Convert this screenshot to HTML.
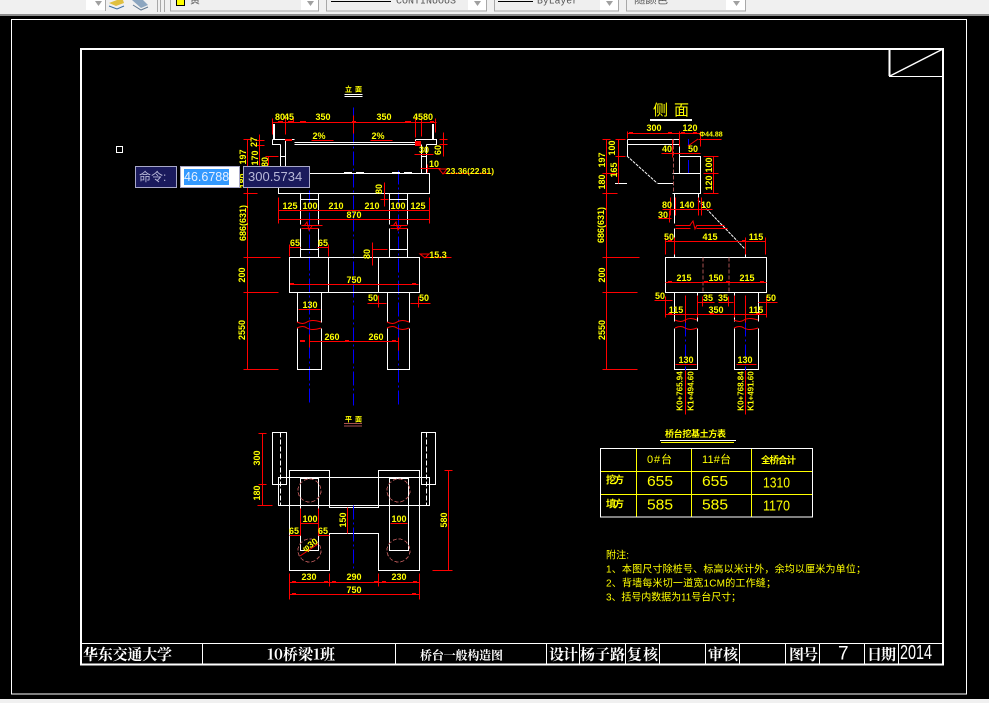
<!DOCTYPE html>
<html><head><meta charset="utf-8"><style>
html,body{margin:0;padding:0;background:#000;width:989px;height:703px;overflow:hidden}
svg{display:block;position:absolute;left:0;top:0}
.w,.r,.b,.br,.y0{fill:none;shape-rendering:crispEdges;transform:translate(.5px,.5px)}
.w{stroke:#fff;stroke-width:1.25}
.w2{stroke:#fff;stroke-width:2;fill:none;shape-rendering:crispEdges}
.r{stroke:#f00;stroke-width:1}
.r2{stroke:#f00;stroke-width:2;fill:none;shape-rendering:crispEdges}
.b{stroke:#00f;stroke-width:1;stroke-dasharray:14 3 2 3}
.br{stroke:#a85050;stroke-width:1;stroke-dasharray:4 2}
.y0{stroke:#ff0;stroke-width:1}
.t text{font:bold 9px "Liberation Sans",sans-serif;fill:#ff0;text-anchor:middle;dominant-baseline:central}
.c text{font-family:"Liberation Sans","Noto Sans CJK SC",sans-serif;fill:#ff0;dominant-baseline:central}
.s text{font-family:"Noto Serif CJK SC","Liberation Serif",serif;fill:#fff;dominant-baseline:central;font-weight:bold}
.n text{font-family:"Liberation Sans","Noto Sans CJK SC",sans-serif;fill:#fff;dominant-baseline:central}
.tb text{font:10px "Liberation Mono","Noto Sans CJK SC",monospace;fill:#555;dominant-baseline:central}
.box{position:absolute;box-sizing:border-box;border:1px solid #a8a8c8;background:#1a1a5c;color:#b8b8d8;font:13px/20px "Liberation Sans","Noto Sans CJK SC",sans-serif;white-space:nowrap;overflow:hidden}
</style></head><body>
<svg width="989" height="703" viewBox="0 0 989 703" xmlns="http://www.w3.org/2000/svg">
<rect width="989" height="703" fill="#000"/>
<!-- toolbar -->
<rect x="0" y="0" width="989" height="14" fill="#f0f0f0"/>
<rect x="0" y="14" width="989" height="2" fill="#8c8c8c"/>
<rect x="0" y="699" width="989" height="4" fill="#f0f0f0"/>
<rect x="86" y="0" width="19" height="10" fill="#fff"/>
<path d="M95 1h7l-3.500 5z" fill="#a0a0a0"/>
<path d="M105.500 0v11M157.500 0v12M160.500 0v12M164.500 0v12" stroke="#a8a8a8" fill="none"/>
<path d="M109 3l8 -3h6l1 3l-8 3z" fill="#e0c040"/>
<path d="M109 6l8 3l7 -3" stroke="#3a6ea5" fill="none"/>
<path d="M132 0h11l5 5l-7 3z" fill="#8ca6c0"/>
<path d="M133 5l8 5l7 -3" stroke="#607890" fill="none"/>
<g fill="#efefef" stroke="#a8a8a8">
<rect x="170.500" y="-2" width="148" height="13"/>
<rect x="326.500" y="-2" width="160" height="13"/>
<rect x="494.500" y="-2" width="124" height="13"/>
<rect x="626.500" y="-2" width="119" height="13"/>
</g>
<g fill="#fff">
<rect x="301" y="0" width="17" height="10"/><rect x="468" y="0" width="18" height="10"/><rect x="600" y="0" width="18" height="10"/><rect x="726" y="0" width="19" height="10"/>
</g>
<g fill="#a0a0a0">
<path d="M307 1h7l-3.500 5z"/><path d="M474 1h7l-3.500 5z"/><path d="M606 1h7l-3.500 5z"/><path d="M733 1h7l-3.500 5z"/>
</g>
<rect x="176.500" y="-1" width="8" height="6.500" fill="#ff0" stroke="#000"/>
<path d="M331 1.500h60M498 1.500h35" stroke="#000" fill="none" shape-rendering="crispEdges"/>
<g class="tb">
<text x="190" y="2" font-size="10">黄</text>
<text x="396" y="2" textLength="60" lengthAdjust="spacingAndGlyphs">CONTINUOUS</text>
<text x="537" y="2" textLength="41" lengthAdjust="spacingAndGlyphs">ByLayer</text>
<text x="634" y="2" textLength="34" lengthAdjust="spacingAndGlyphs">随颜色</text>
</g>

<!-- frames -->
<rect x="11.500" y="19.500" width="955" height="674.500" fill="none" stroke="#fff"/>
<rect x="81" y="49" width="862" height="615.500" class="w2"/>
<path d="M81 643.500H943M202.500 643V664M395.500 643V664M546.500 643V664M579.500 643V664M625.500 643V664M659.500 643V664M705.500 643V664M739.500 643V664M785.500 643V664M819.500 643V664M864.500 643V664M898.500 643V664" stroke="#fff" fill="none" shape-rendering="crispEdges"/>
<path class="w2" d="M889.500 49V76"/>
<path d="M889 76.500H943" stroke="#fff" fill="none" shape-rendering="crispEdges"/>
<path d="M890 76L943 49" stroke="#fff" stroke-width="1.500" fill="none"/>
<rect x="116.500" y="146.500" width="6" height="6" fill="none" stroke="#fff"/>

<!-- FRONT VIEW white -->
<path class="b" d="M353 107V405M398 170V405M309 190V405"/>
<path class="w" d="M272 139H294M272 139V144H280M280 144V173M285 139V173M280 156H285M294 142H415M294 144H415M415 139V144M415 139H436V144H426M421 144V173M426 144V173M421 156H426M278 173H429V193H278ZM300 193V224M318 193V224M300 199H318M389 193V224M407 193V224M389 199H407M300 228V257M318 228V257M300 249H318M389 228V257M407 228V257M389 249H407M289 257H419V292H289ZM328 257V292M378 257V292M297 292V322M321 292V322M387 292V322M409 292V322M297 328V369H321V328M387 328V369H409V328"/>
<path class="w2" d="M274 124V139M433 124V139"/>
<path stroke="#fff" stroke-width="1" fill="none" d="M344 172.500h8M356 172.500h8M392 172.500h8M404 172.500h8"/>
<path class="w" d="M344 94H362M344 96H362"/>
<!-- FRONT VIEW red -->
<path class="r" d="M272 122H436M272 118V134M285 118V134M293 118V122M353 115V133M415 118V137M421 118V136M435 118V132M247 139V369M243 139H250M243 193H257M243 257H280M243 292H278M243 369H278M259 134V165M255 140H264M255 145H264M268 156V165M265 156H278M278 197V223M429 197V223M278 210H429M278 219H429M301 225H322M301 228H318M390 225H407M390 228H407M289 247H300M317 247H328M289 244V256M328 244V256M372 242V265M372 249H387M384 182V206M380 199H388M414 154H433M443 132V156M439 139H447M439 144H447M420 168H440M427 164V172M444 173H491M290 284H418M298 309H320M367 303H386M378 295V307M410 303H430M418 296V307M309 334V347M398 337V350M309 341H398M311 140H333M370 140H392"/>
<path class="r2" d="M278 122h5M288 122h5M300 122h6M352 122h4M405 122h6M430 122h4M290 284h4M412 284h4M300 341h5M345 341h4M392 341h4M285 140h7"/>
<path stroke="#f00" fill="none" d="M304 226l3 -4l2 8l3 -4M393 226l3 -4l2 8l3 -4M297 322q6 3 10 0q5 -3 14 0M387 322q6 3 10 0q5 -3 12 0M297 328q6 -3 10 0q5 3 14 0M387 328q6 -3 10 0q5 3 12 0"/>
<path d="M415 141h6v5h-6z" fill="#f00"/>
<path d="M439 169h8l-4 5z" fill="none" stroke="#f00"/>
<path d="M420 254h9l-4 4z" fill="none" stroke="#f00"/>
<path class="r" d="M424 257H451"/>
<!-- PLAN white -->
<path class="w" d="M272 432H286V484H272ZM421 432H435V484H421ZM278 477H429V505H278ZM289 470H329V507H378V470H419V570H378V533H329V570H289ZM300 478H318V550H300ZM389 478H408V550H389Z"/>
<path class="w" stroke-dasharray="5 2" d="M280 432V505M426 432V505"/>
<circle class="br" cx="309" cy="490" r="11.500" stroke-dasharray="3 2"/>
<circle class="br" cx="309" cy="550" r="11.500" stroke-dasharray="3 2"/>
<circle class="br" cx="398" cy="490" r="11.500" stroke-dasharray="3 2"/>
<circle class="br" cx="398" cy="550" r="11.500" stroke-dasharray="3 2"/>
<path class="b" d="M353 505V570"/>
<path stroke="#a85050" fill="none" d="M344 423.500H362M344 426H362"/>
<path class="r" d="M262 433V505M258 433H266M258 484H266M257 505H272M347 507V533M448 470V570M444 470H452M432 570H452M300 508V535M318 508V535M300 523H318M390 523H407M289 535H300M318 535H329M289 573V586M329 573V586M378 573V586M419 573V599M289 582H419M289 586V599M289 594H419"/>
<path stroke="#f00" fill="none" d="M300 556L318 544"/>
<path class="r2" d="M292 582h4M324 582h4M332 582h4M374 582h4M382 582h4M413 582h4M292 594h4M412 594h4"/>
<!-- SIDE white -->
<path class="w" d="M627 139H679V144H627M627 139V156M657 183H673M679 139V173M679 156H700V193H672M672 173H700M674 193V223M698 193V200M674 228V257M745 249V257M665 257H766V292H665ZM674 292V321M697 292V321M734 292V321M758 292V321M674 328V369H697V328M734 328V369H758V328"/>
<path stroke="#fff" fill="none" stroke-dasharray="3 1" d="M627 156L657 183M698 200L745 249"/>
<path class="w2" d="M650 120H692"/>
<path stroke="#fff" stroke-width="1" fill="none" d="M615 183.500H627"/>
<path class="br" d="M673 139V193M702.500 257V292M728.500 257V292"/>
<path stroke="#00f" fill="none" d="M688.500 139V146M688.500 160V173"/>
<path class="b" d="M685 322V370M745 322V370" stroke-dasharray="7 2 2 2"/>
<!-- SIDE red -->
<path class="r" d="M606 139V369M602 139H610M602 173H617M602 193H617M602 257H639M602 292H637M602 369H637M618 139V183M615 139H625M615 156H625M627 133H700M627 131V138M679 131V146M700 131V146M661 153H700M672 139V157M698 139H721M713 156V193M703 156H718M703 173H718M703 193H718M662 209H712M670 197V215M675 197V215M698 197V215M701 197V215M658 218H671M669 210V222M675 225H690M696 225H724M675 228H690M696 228H727M665 241H765M665 237V254M674 237V254M745 237V254M765 237V254M665 282H766M665 296V317M766 296V317M697 295V317M734 295V317M665 314H766M654 300H672M758 302H777M766 296V306M697 302H714M702 296V306M718 302H733M728 296V306M675 364H696M736 364H756M685 295V322M745 295V322M685 370V414M745 370V414"/>
<path stroke="#f00" fill="none" d="M688 146L698 139M690 225l3 -4l2 8l2 -4M675 320q6 3 10 0q5 -3 12 0M734 320q6 3 10 0q5 -3 14 0M675 328q6 -3 10 0q5 3 12 0M734 328q6 -3 10 0q5 3 14 0"/>
<path class="r2" d="M629 133h4M668 133h4M681 133h4M693 133h4M668 241h4M742 241h4M668 282h4M704 282h4M726 282h4M760 282h4M668 314h4M710 314h4M756 314h4"/>
<!-- table -->
<path d="M601 471.500H812M601 494.500H812M636.500 449V517M691.500 449V517M751.500 449V517" stroke="#ff0" fill="none" shape-rendering="crispEdges"/>
<rect x="600.500" y="448.500" width="212" height="68.500" fill="none" stroke="#fff" shape-rendering="crispEdges"/>
<path d="M660 440.500H736" stroke="#fff" fill="none" shape-rendering="crispEdges"/>
<path d="M661 442.500H734" stroke="#ff0" fill="none" shape-rendering="crispEdges"/>

<!-- dim text -->
<g class="t">
<text x="280" y="117" font-size="8">80</text><text x="289" y="117">45</text><text x="323" y="117">350</text><text x="384" y="117">350</text><text x="418" y="117">45</text><text x="428" y="117">80</text>
<text x="319" y="136">2%</text><text x="378" y="136">2%</text>
<text x="424" y="150">30</text><text x="434" y="164">10</text>
<text x="470" y="171" style="font-size:8.500px">23.36(22.81)</text>
<text x="290" y="206">125</text><text x="310" y="206">100</text><text x="336" y="206">210</text><text x="372" y="206">210</text><text x="398" y="206">100</text><text x="418" y="206">125</text><text x="354" y="215">870</text>
<text x="295" y="243">65</text><text x="323" y="243">65</text><text x="438" y="255">15.3</text>
<text x="354" y="280">750</text><text x="310" y="305">130</text><text x="373" y="298">50</text><text x="424" y="298">50</text><text x="332" y="337">260</text><text x="376" y="337">260</text>
<text transform="rotate(-90 243 157)" x="243" y="157">197</text>
<text transform="rotate(-90 255 158)" x="255" y="158">170</text>
<text transform="rotate(-90 254 142)" x="254" y="142">27</text>
<text transform="rotate(-90 243 181)" x="243" y="181">180</text>
<text transform="rotate(-90 243 223)" x="243" y="223">686(631)</text>
<text transform="rotate(-90 242 275)" x="242" y="275">200</text>
<text transform="rotate(-90 242 330)" x="242" y="330">2550</text>
<text transform="rotate(-90 265 162)" x="265" y="162">80</text>
<text transform="rotate(-90 379 189)" x="379" y="189">80</text>
<text transform="rotate(-90 367 254)" x="367" y="254">80</text>
<text transform="rotate(-90 438 150)" x="438" y="150">60</text>
<!-- plan -->
<text transform="rotate(-90 257 458)" x="257" y="458">300</text>
<text transform="rotate(-90 257 493)" x="257" y="493">180</text>
<text transform="rotate(-90 343 520)" x="343" y="520">150</text>
<text transform="rotate(-90 444 520)" x="444" y="520">580</text>
<text x="310" y="519">100</text><text x="399" y="519">100</text><text x="294" y="531">65</text><text x="323" y="531">65</text>
<text transform="rotate(-35 310 545)" x="310" y="545">φ30</text>
<text x="309" y="577">230</text><text x="354" y="577">290</text><text x="399" y="577">230</text><text x="354" y="590">750</text>
<!-- side -->
<text x="654" y="128">300</text><text x="690" y="128">120</text>
<text x="667" y="149">40</text><text x="693" y="149">50</text>
<text x="711" y="135" style="font-size:7px;font-weight:bold">Φ44.88</text>
<text transform="rotate(-90 709 165)" x="709" y="165">100</text>
<text transform="rotate(-90 709 183)" x="709" y="183">120</text>
<text x="667" y="205">80</text><text x="687" y="205">140</text><text x="706" y="205">10</text><text x="663" y="215">30</text>
<text x="669" y="237">50</text><text x="710" y="237">415</text><text x="756" y="237">115</text>
<text x="684" y="278">215</text><text x="716" y="278">150</text><text x="747" y="278">215</text>
<text x="660" y="296">50</text><text x="771" y="298">50</text><text x="708" y="298">35</text><text x="723" y="298">35</text>
<text x="676" y="310">115</text><text x="716" y="310">350</text><text x="756" y="310">115</text>
<text x="686" y="360">130</text><text x="745" y="360">130</text>
<text transform="rotate(-90 602 160)" x="602" y="160">197</text>
<text transform="rotate(-90 602 182)" x="602" y="182">180</text>
<text transform="rotate(-90 614 170)" x="614" y="170">165</text>
<text transform="rotate(-90 612 148)" x="612" y="148">100</text>
<text transform="rotate(-90 601 225)" x="601" y="225">686(631)</text>
<text transform="rotate(-90 602 275)" x="602" y="275">200</text>
<text transform="rotate(-90 602 330)" x="602" y="330">2550</text>
<text transform="rotate(-90 680 391)" x="680" y="391" style="font-size:8px">K0+765.94</text>
<text transform="rotate(-90 691 391)" x="691" y="391" style="font-size:8px">K1+494.60</text>
<text transform="rotate(-90 741 391)" x="741" y="391" style="font-size:8px">K0+768.84</text>
<text transform="rotate(-90 751 391)" x="751" y="391" style="font-size:8px">K1+491.60</text>
</g>

<g class="c">
<text x="345" y="90" font-size="7" font-weight="bold" textLength="17">立 面</text>
<text x="345" y="420" font-size="7" font-weight="bold" textLength="17">平 面</text>
<text x="653" y="110.500" font-size="15" textLength="36">侧 面</text>
<text x="665" y="434" font-size="9" font-weight="bold" textLength="61">桥台挖基土方表</text>
<text x="647" y="460" font-size="11" textLength="25">0#台</text>
<text x="702" y="460" font-size="11" textLength="29">11#台</text>
<text x="761" y="461" font-size="9.500" font-weight="bold" textLength="35">全桥合计</text>
<text x="606" y="481" font-size="10" font-weight="bold" textLength="18">挖方</text>
<text x="606" y="505" font-size="10" font-weight="bold" textLength="18">填方</text>
<text x="647" y="481.500" font-size="15" textLength="26" lengthAdjust="spacingAndGlyphs">655</text><text x="702" y="481.500" font-size="15" textLength="26" lengthAdjust="spacingAndGlyphs">655</text><text x="763" y="483" font-size="15" textLength="27" lengthAdjust="spacingAndGlyphs">1310</text>
<text x="647" y="505" font-size="15" textLength="26" lengthAdjust="spacingAndGlyphs">585</text><text x="702" y="505" font-size="15" textLength="26" lengthAdjust="spacingAndGlyphs">585</text><text x="763" y="506" font-size="15" textLength="27" lengthAdjust="spacingAndGlyphs">1170</text>
<text x="606" y="556" font-size="10" textLength="23">附注:</text>
<text x="606" y="570" font-size="10" textLength="260">1、本图尺寸除桩号、标高以米计外，余均以厘米为单位；</text>
<text x="606" y="584" font-size="10" textLength="170">2、背墙每米切一道宽1CM的工作缝；</text>
<text x="606" y="598" font-size="10" textLength="135">3、括号内数据为11号台尺寸；</text>
</g>

<g class="s">
<text x="83" y="654" font-size="15" textLength="89">华东交通大学</text>
<text x="267" y="654" font-size="15" textLength="68">10桥梁1班</text>
<text x="420" y="655" font-size="12" textLength="83">桥台一般构造图</text>
<text x="549" y="654" font-size="15" textLength="29">设计</text>
<text x="580" y="654" font-size="15" textLength="45">杨子路</text>
<text x="627" y="654" font-size="15" textLength="31">复核</text>
<text x="708" y="654" font-size="15" textLength="30">审核</text>
<text x="789" y="654" font-size="15" textLength="29">图号</text>
<text x="867" y="654" font-size="15" textLength="29">日期</text>
</g>
<g class="n">
<text x="838" y="654" font-size="19" font-weight="normal">7</text>
<text x="900" y="653" font-size="20" textLength="32" lengthAdjust="spacingAndGlyphs">2014</text>
</g>
</svg>

<div class="box" style="left:135px;top:166px;width:42px;height:22px;padding-left:3px;font-size:12px;line-height:20px">命令:</div>
<div class="box" style="left:180px;top:166px;width:60px;height:22px;background:#fff;padding:2px 0 0 3px;line-height:16px;color:#e8f0ff;font-size:12.500px"><span style="background:#3399ff;display:inline-block;height:16px">46.6788</span></div>
<div class="box" style="left:243px;top:166px;width:67px;height:22px;padding-left:4px">300.5734</div>
</body></html>
